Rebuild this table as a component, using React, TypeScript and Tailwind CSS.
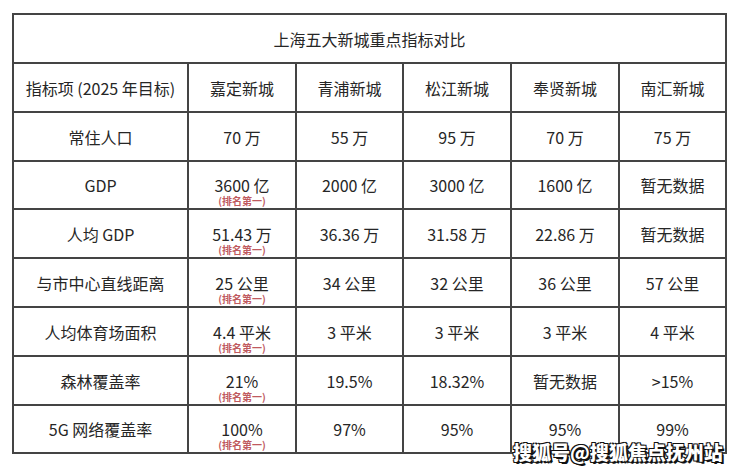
const cities = ['嘉定新城', '青浦新城', '松江新城', '奉贤新城', '南汇新城']

// first value of each row is the one ranked first
const rows: { label: string; h: string; values: string[]; top?: boolean }[] = [
  { label: '常住人口', h: 'h-[49px]', values: ['70 万', '55 万', '95 万', '70 万', '75 万'] },
  { label: 'GDP', h: 'h-[48px]', values: ['3600 亿', '2000 亿', '3000 亿', '1600 亿', '暂无数据'], top: true },
  { label: '人均 GDP', h: 'h-[49px]', values: ['51.43 万', '36.36 万', '31.58 万', '22.86 万', '暂无数据'], top: true },
  { label: '与市中心直线距离', h: 'h-[49px]', values: ['25 公里', '34 公里', '32 公里', '36 公里', '57 公里'], top: true },
  { label: '人均体育场面积', h: 'h-[49px]', values: ['4.4 平米', '3 平米', '3 平米', '3 平米', '4 平米'], top: true },
  { label: '森林覆盖率', h: 'h-[49px]', values: ['21%', '19.5%', '18.32%', '暂无数据', '>15%'], top: true },
  { label: '5G 网络覆盖率', h: 'h-[48px]', values: ['100%', '97%', '95%', '95%', '99%'], top: true },
]

const cell = 'border-2 border-[#444] text-center align-middle p-0'

function Value({ text, top }: { text: string; top?: boolean }) {
  return (
    <div className="flex flex-col items-center justify-center">
      <span className="leading-[18px]">{text}</span>
      {top && (
        <span className="mt-[1px] text-[10px] leading-[11px] -mb-[12px] font-bold text-[#c05a5f]">(排名第一)</span>
      )}
    </div>
  )
}

export default function App() {
  return (
    <div
      className="relative w-[740px] h-[469px] bg-white pl-[12px] pt-[13px] text-[#262626] text-[16px]"
      style={{ fontFamily: '"Noto Sans CJK SC", "Noto Sans", sans-serif' }}
    >
      <table className="border-collapse w-[713px] table-fixed">
        <colgroup>
          <col className="w-[175px]" />
          <col className="w-[108px]" />
          <col className="w-[107px]" />
          <col className="w-[108px]" />
          <col className="w-[108px]" />
          <col className="w-[107px]" />
        </colgroup>
        <tbody>
          <tr className="h-[49px]">
            <td colSpan={6} className={cell}>上海五大新城重点指标对比</td>
          </tr>
          <tr className="h-[49px]">
            <td className={cell}>指标项 (2025 年目标)</td>
            {cities.map((c) => (
              <td key={c} className={cell}>{c}</td>
            ))}
          </tr>
          {rows.map((r) => (
            <tr key={r.label} className={r.h}>
              <td className={cell}>{r.label}</td>
              {r.values.map((v, i) => (
                <td key={i} className={cell}>
                  <Value text={v} top={r.top && i === 0} />
                </td>
              ))}
            </tr>
          ))}
        </tbody>
      </table>

      {/* watermark */}
      <div
        className="absolute left-[513px] top-[440px] text-[19px] leading-[24px] font-black text-white"
        style={{ textShadow: '1px 1px 0 #111, -1px -1px 0 #111, 1px -1px 0 #111, -1px 1px 0 #111, 2px 2px 0 #111' }}
      >
        搜狐号@搜狐焦点抚州站
      </div>
    </div>
  )
}
